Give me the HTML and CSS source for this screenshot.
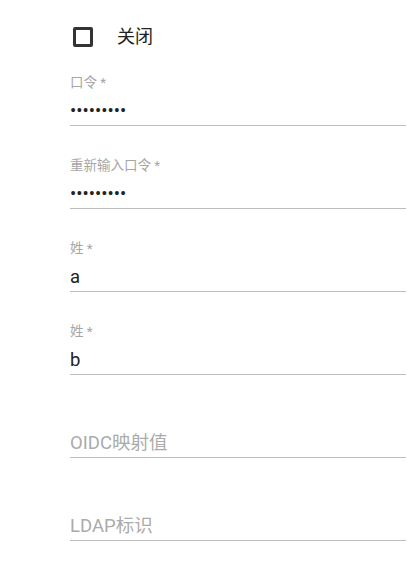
FILE: index.html
```html
<!DOCTYPE html>
<html lang="zh-cn">
<head>
<meta charset="UTF-8" />
<meta name="viewport" content="width=device-width, initial-scale=1" />
<title>用户</title>
<link rel="stylesheet" href="styles.css">
</head>
<body>
<div class="form">
    <label class="check-row">
        <span class="check-box"></span>
        <span class="check-text">关闭</span>
    </label>

    <div class="field">
        <label class="field-label" for="pwd">口令 *</label>
        <input class="field-input" type="password" id="pwd" value="123456789" />
    </div>
    <div class="field">
        <label class="field-label" for="pwd2">重新输入口令 *</label>
        <input class="field-input" type="password" id="pwd2" value="123456789" />
    </div>
    <div class="field">
        <label class="field-label" for="xing">姓 *</label>
        <input class="field-input" type="text" id="xing" value="a" />
    </div>
    <div class="field">
        <label class="field-label" for="xing2">姓 *</label>
        <input class="field-input" type="text" id="xing2" value="b" />
    </div>
    <div class="field">
        <label class="field-label" for="oidc"></label>
        <input class="field-input" type="text" id="oidc" placeholder="OIDC映射值" />
    </div>
    <div class="field">
        <label class="field-label" for="ldap"></label>
        <input class="field-input" type="text" id="ldap" placeholder="LDAP标识" />
    </div>
</div>
</body>
</html>
```

FILE: styles.css
```css
body { margin: 0; background: #fff; font-family: Roboto, "Noto Sans CJK SC", sans-serif; color: #222; }
.form { padding: 27px 0 0 70px; width: 336px; }
.check-row { display: flex; align-items: center; height: 20px; margin-left: 3px; margin-bottom: 27px; cursor: pointer; }
.check-box { width: 20px; height: 20px; box-sizing: border-box; border: 3px solid #333; border-radius: 2px; }
.check-text { margin-left: 24px; font-size: 18px; line-height: 20px; color: #222; }
.field { margin-bottom: 31px; }
.field-label { display: block; height: 16px; line-height: 16px; font-size: 13.5px; color: #a6a6a6; }
.field-input { display: block; width: 100%; box-sizing: border-box; margin-top: 7px; padding: 2px 0 2px 0; height: 29px; line-height: 24px; font-family: inherit; font-size: 18.5px; color: #222; border: none; border-bottom: 1px solid #bdbdbd; outline: none; background: transparent; }
.field-input::placeholder { color: #ababab; }
```
